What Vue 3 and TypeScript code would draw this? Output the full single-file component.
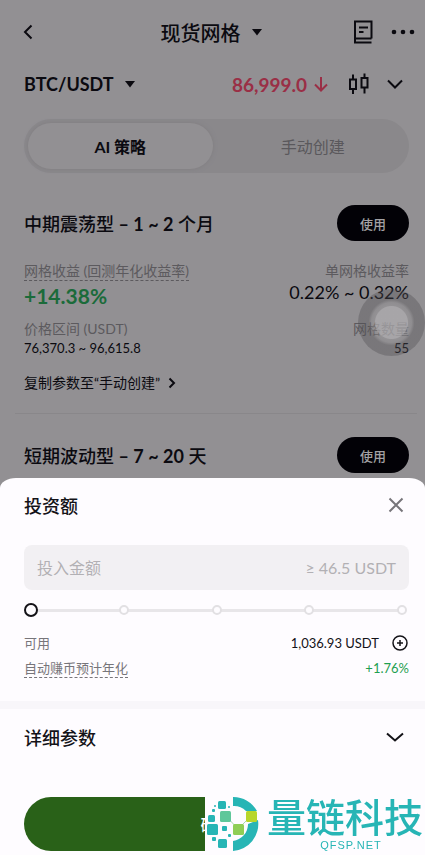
<script setup lang="ts">
import { ref } from 'vue'

interface Strategy {
  kind: string
  term: string
  unit: string
  detail?: {
    apr: string
    perGrid: string
    range: string
    grids: string
  }
}

const strategies: Strategy[] = [
  {
    kind: '中期震荡型',
    term: '– 1 ~ 2',
    unit: '个月',
    detail: {
      apr: '+14.38%',
      perGrid: '0.22% ~ 0.32%',
      range: '76,370.3 ~ 96,615.8',
      grids: '55',
    },
  },
  { kind: '短期波动型', term: '– 7 ~ 20', unit: '天' },
]

const tabs = ['AI 策略', '手动创建']
const activeTab = ref(0)
const amount = ref('')
const percent = ref(0)
</script>

<template>
  <div class="screen">
    <main class="page">
      <header class="topbar">
        <button class="icon-btn back" type="button" aria-label="返回">
          <svg width="12" height="18" viewBox="0 0 12 18"><path d="M9.500 2.500 3 9l6.500 6.500" /></svg>
        </button>
        <button class="title" type="button">
          现货网格
          <svg class="caret" width="12" height="8" viewBox="0 0 12 8"><path d="M1 1h10L6 7.500z" /></svg>
        </button>
        <div class="top-actions">
          <button class="icon-btn" type="button" aria-label="教程">
            <svg width="20" height="24" viewBox="0 0 20 24">
              <path d="M18.500 18.500V1.500H2v21h16.500M2 18.500h16.500M6 7.500h9M6 12h4.500" />
            </svg>
          </button>
          <button class="icon-btn" type="button" aria-label="更多">
            <svg class="dots" width="24" height="6" viewBox="0 0 24 6">
              <circle cx="3" cy="3" r="2.300" /><circle cx="12" cy="3" r="2.300" /><circle cx="21" cy="3" r="2.300" />
            </svg>
          </button>
        </div>
      </header>

      <section class="pair-row">
        <button class="pair" type="button">
          BTC/USDT
          <svg class="caret" width="12" height="8" viewBox="0 0 12 8"><path d="M1 1h10L6 7.500z" /></svg>
        </button>
        <div class="quote">
          <span class="price">86,999.0</span>
          <svg class="down" width="14" height="16" viewBox="0 0 14 16"><path d="M7 1v13.500M1 8.500l6 6 6-6" /></svg>
          <button class="icon-btn candles" type="button" aria-label="K线">
            <svg width="22" height="22" viewBox="0 0 22 22">
              <path d="M2 6.500h6v9.500H2zM5 1.500v5M5 16v5M13.500 5h6v9.500h-6zM16.500 .5V5M16.500 14.500v6" />
            </svg>
          </button>
          <button class="icon-btn" type="button" aria-label="展开">
            <svg width="16" height="10" viewBox="0 0 16 10"><path d="M1 1.500l7 7 7-7" /></svg>
          </button>
        </div>
      </section>

      <nav class="tabs" role="tablist">
        <button
          v-for="(tab, i) in tabs"
          :key="tab"
          type="button"
          role="tab"
          class="tab"
          :class="{ active: activeTab === i }"
          :aria-selected="activeTab === i"
          @click="activeTab = i"
        >
          {{ tab }}
        </button>
      </nav>

      <article v-for="s in strategies" :key="s.kind" class="card">
        <div class="card-head">
          <h2>{{ s.kind }} <b>{{ s.term }}</b> {{ s.unit }}</h2>
          <button class="use" type="button">使用</button>
        </div>
        <template v-if="s.detail">
          <dl class="metrics">
            <div>
              <dt><span class="hint">网格收益 (回测年化收益率)</span></dt>
              <dd class="apr">{{ s.detail.apr }}</dd>
            </div>
            <div class="right">
              <dt>单网格收益率</dt>
              <dd class="per-grid">{{ s.detail.perGrid }}</dd>
            </div>
            <div>
              <dt>价格区间 (USDT)</dt>
              <dd>{{ s.detail.range }}</dd>
            </div>
            <div class="right">
              <dt>网格数量</dt>
              <dd>{{ s.detail.grids }}</dd>
            </div>
          </dl>
          <a class="copy" href="#manual">
            复制参数至“手动创建”
            <svg width="8" height="12" viewBox="0 0 8 12"><path d="M1.500 1.500 6 6l-4.500 4.500" /></svg>
          </a>
        </template>
      </article>
    </main>

    <div class="assist" aria-hidden="true"></div>

    <section class="sheet" role="dialog" aria-labelledby="sheet-title">
      <div class="invest">
        <div class="sheet-head">
          <h2 id="sheet-title">投资额</h2>
          <button class="icon-btn close" type="button" aria-label="关闭">
            <svg width="16" height="16" viewBox="0 0 16 16"><path d="M1.500 1.500l13 13M14.500 1.500l-13 13" /></svg>
          </button>
        </div>

        <div class="field">
          <input v-model="amount" type="text" inputmode="decimal" placeholder="投入金额" aria-label="投入金额" />
          <span>≥ 46.5 USDT</span>
        </div>

        <div class="slider">
          <div class="stops">
            <i v-for="n in 5" :key="n"></i>
          </div>
          <input v-model.number="percent" type="range" min="0" max="100" aria-label="投入比例" />
        </div>

        <div class="line">
          <span>可用</span>
          <span class="balance">
            1,036.93 USDT
            <button class="icon-btn plus" type="button" aria-label="充值">
              <svg width="18" height="18" viewBox="0 0 18 18">
                <circle cx="9" cy="9" r="7" /><path d="M9 6v6M6 9h6" />
              </svg>
            </button>
          </span>
        </div>
        <div class="line earn">
          <span class="hint">自动赚币预计年化</span>
          <span class="gain">+1.76%</span>
        </div>
      </div>

      <button class="params" type="button">
        详细参数
        <svg width="18" height="10" viewBox="0 0 18 10"><path d="M1 1.500l8 7 8-7" /></svg>
      </button>

      <div class="footer">
        <button class="confirm" type="button">确认</button>
      </div>

      <div class="brand">
        <svg class="brand-mark" width="55" height="56" viewBox="0 0 55 56">
          <path class="teal" d="M28 1a27 27 0 0 1 24 14H41a17 17 0 0 0-13-5zM28 55V45A17 17 0 0 0 43 28l10-4a27 27 0 0 1-25 31z" />
          <path class="link" d="M21 20 33 33 46 20" />
          <g class="teal">
            <rect x="13" y="5" width="8" height="8" rx="1.500" />
            <rect x="3" y="19" width="7" height="7" rx="1.500" />
            <rect x="2" y="28" width="11" height="11" rx="1.500" />
            <rect x="17" y="30" width="5" height="5" rx="1" />
            <rect x="13" y="43" width="9" height="9" rx="1.500" />
            <rect x="7" y="41" width="4" height="4" rx="1" />
            <rect x="23" y="38" width="3" height="3" rx="1" />
            <rect x="7" y="13" width="3" height="3" rx="1" />
            <circle cx="10" cy="10" r="1" /><circle cx="24" cy="11" r="1" />
          </g>
          <rect class="mint" x="15" y="15" width="11" height="11" rx="1.500" />
          <rect class="leaf" x="28" y="28" width="11" height="11" rx="1.500" />
          <rect class="lime" x="41" y="15" width="11" height="11" rx="1.500" />
        </svg>
        <div class="brand-text">
          <strong>量链科技</strong>
          <small>QFSP.NET</small>
        </div>
      </div>
    </section>
  </div>
</template>

<style>
body {
  margin: 0;
  background: #929093;
}
</style>

<style scoped>
.screen {
  position: relative;
  min-height: 100vh;
  overflow: hidden;
  background: #929093;
  color: #0b0a10;
  font-family: Lato, 'Noto Sans CJK SC', sans-serif;
  font-size: 13px;
}

button,
input {
  margin: 0;
  padding: 0;
  border: 0;
  background: none;
  color: inherit;
  font: inherit;
}

h2,
dl,
dd {
  margin: 0;
}

svg {
  display: block;
  flex: none;
  fill: none;
  stroke: currentColor;
  stroke-width: 2;
}

.caret,
.dots {
  fill: currentColor;
  stroke: none;
}

.icon-btn {
  display: flex;
  align-items: center;
  justify-content: center;
}

.topbar {
  display: grid;
  grid-template-columns: 1fr auto 1fr;
  align-items: center;
  height: 64px;
  padding: 0 10px 0 8px;
}

.back {
  justify-self: start;
  margin-left: 14px;
}

.title {
  display: flex;
  align-items: center;
  gap: 10px;
  font-size: 20px;
  font-weight: 500;
}

.top-actions {
  display: flex;
  align-items: center;
  justify-content: flex-end;
  gap: 18px;
}

.pair-row {
  display: flex;
  align-items: center;
  justify-content: space-between;
  height: 40px;
  padding: 0 22px 0 24px;
}

.pair {
  display: flex;
  align-items: center;
  gap: 10px;
  font-size: 18px;
  font-weight: 700;
}

.quote {
  display: flex;
  align-items: center;
}

.price {
  color: #9a2f46;
  font-size: 19px;
  font-weight: 700;
}

.down {
  margin-left: 7px;
  color: #9a2f46;
}

.candles {
  margin: 0 17px 0 20px;
}

.tabs {
  display: grid;
  grid-template-columns: 1fr 1fr;
  gap: 8px;
  height: 46px;
  margin: 15px 16px 0 24px;
  padding: 4px;
  border-radius: 27px;
  background: #8a888b;
}

.tab {
  border-radius: 23px;
  color: #5a585c;
  font-size: 16px;
}

.tab.active {
  background: #929093;
  box-shadow: 0 0 4px #7f7d80;
  color: #0b0a10;
  font-weight: 700;
}

.card {
  margin: 0 8px 0 15px;
  padding: 0 8px 20px 9px;
  border-bottom: 1px solid #89878a;
}

.tabs + .card {
  padding-top: 32px;
}

.card + .card {
  padding-top: 23px;
  border-bottom: 0;
}

.card-head {
  display: flex;
  align-items: center;
  justify-content: space-between;
}

.card-head h2 {
  font-size: 18px;
  font-weight: 500;
}

.card-head b {
  font-weight: 700;
}

.use {
  width: 72px;
  height: 36px;
  border-radius: 18px;
  background: #020106;
  color: #a3a1a4;
  font-size: 13px;
  font-weight: 500;
}

.metrics {
  display: grid;
  grid-template-columns: 1fr auto;
  row-gap: 8px;
  margin-top: 20px;
}

.right {
  text-align: right;
}

dt {
  height: 20px;
  color: #5c5a5e;
  font-size: 14px;
  line-height: 20px;
}

dd {
  line-height: 18px;
}

.hint {
  display: inline-block;
  box-sizing: border-box;
  height: 20px;
  border-bottom: 1px dashed currentColor;
  line-height: 20px;
}

.apr {
  color: #1b6b3a;
  font-size: 21px;
  font-weight: 700;
  line-height: 30px;
}

.per-grid {
  font-size: 18px;
  line-height: 22px;
}

.copy {
  display: flex;
  align-items: center;
  gap: 8px;
  margin-top: 16px;
  color: inherit;
  font-size: 14px;
  line-height: 20px;
  text-decoration: none;
}

.assist {
  position: absolute;
  top: 289px;
  right: 0;
  box-sizing: border-box;
  width: 67px;
  height: 67px;
  border-radius: 50%;
  background: radial-gradient(circle, rgba(176, 174, 177, 0.7) 16px, rgba(150, 148, 151, 0.4) 17px, rgba(140, 138, 141, 0.4) 20px, rgba(80, 78, 82, 0.38) 23px);
}

.sheet {
  position: fixed;
  right: 0;
  bottom: 0;
  left: 0;
  border-radius: 16px 16px 0 0 / 10px 10px 0 0;
  background: #fefcff;
  color: #141318;
}

.invest {
  padding: 16px 16px 23px 24px;
  border-bottom: 8px solid #f8f6fa;
}

.sheet-head {
  display: flex;
  align-items: center;
  justify-content: space-between;
  height: 22px;
  padding-right: 5px;
}

.sheet-head h2 {
  font-size: 18px;
  font-weight: 500;
}

.close {
  color: #77757a;
}

.field {
  display: flex;
  align-items: center;
  height: 45px;
  margin-top: 29px;
  padding: 0 13px;
  border-radius: 8px;
  background: #f2f0f3;
  color: #b2b0b4;
  font-size: 16px;
}

.field input {
  flex: 1;
  min-width: 0;
  outline: 0;
  color: #141318;
}

.field input::placeholder {
  color: #b2b0b4;
}

.slider {
  display: grid;
  align-items: center;
  margin: 13px 0 16px;
}

.stops,
.slider input {
  grid-area: 1 / 1;
}

.stops {
  display: flex;
  justify-content: space-between;
  align-items: center;
  height: 14px;
  padding: 0 2px;
  background: linear-gradient(#e8e6e9, #e8e6e9) center / calc(100% - 14px) 3px no-repeat;
}

.stops i {
  box-sizing: border-box;
  width: 10px;
  height: 10px;
  border: 2px solid #e2e0e3;
  border-radius: 50%;
  background: #fefcff;
}

.slider input {
  appearance: none;
  width: 100%;
  height: 14px;
  outline: 0;
}

.slider input::-webkit-slider-thumb {
  appearance: none;
  box-sizing: border-box;
  width: 14px;
  height: 14px;
  border: 2px solid #141318;
  border-radius: 50%;
  background: #fefcff;
}

.line {
  display: flex;
  justify-content: space-between;
  height: 20px;
  color: #77757a;
  line-height: 20px;
}

.earn {
  margin-top: 5px;
}

.balance {
  display: flex;
  align-items: center;
  gap: 12px;
  color: #141318;
}

.plus svg {
  stroke-width: 1.5;
}

.gain {
  color: #1fa050;
}

.params {
  display: flex;
  align-items: center;
  justify-content: space-between;
  width: 100%;
  height: 56px;
  padding: 0 21px 0 24px;
  font-size: 18px;
  font-weight: 500;
}

.footer {
  padding: 32px 16px 4px 24px;
}

.confirm {
  width: 100%;
  height: 54px;
  border-radius: 27px;
  background: #296118;
  color: #fff;
  font-size: 16px;
  font-weight: 500;
}

.brand {
  position: absolute;
  right: 0;
  bottom: 0;
  display: flex;
  align-items: flex-start;
  box-sizing: border-box;
  width: 220px;
  height: 59px;
  background: #fefcff;
}

.brand-mark {
  stroke: none;
}

.teal {
  fill: #27b5b5;
}

.link {
  stroke: #a8d8b0;
  stroke-width: 1;
}

.mint {
  fill: #5fc79a;
}

.leaf {
  fill: #8fce55;
}

.lime {
  fill: #b8d62b;
}

.brand-text {
  display: flex;
  flex-direction: column;
  align-items: center;
  gap: 4px;
  margin-left: 7px;
  color: #27b5b5;
}

.brand-text strong {
  font-family: 'Noto Sans CJK SC', sans-serif;
  font-size: 39px;
  font-weight: 500;
  line-height: 39px;
}

.brand-text small {
  padding-left: 12px;
  font-family: 'Liberation Sans', Arial, sans-serif;
  font-size: 11px;
  letter-spacing: 1px;
  line-height: 12px;
}
</style>
